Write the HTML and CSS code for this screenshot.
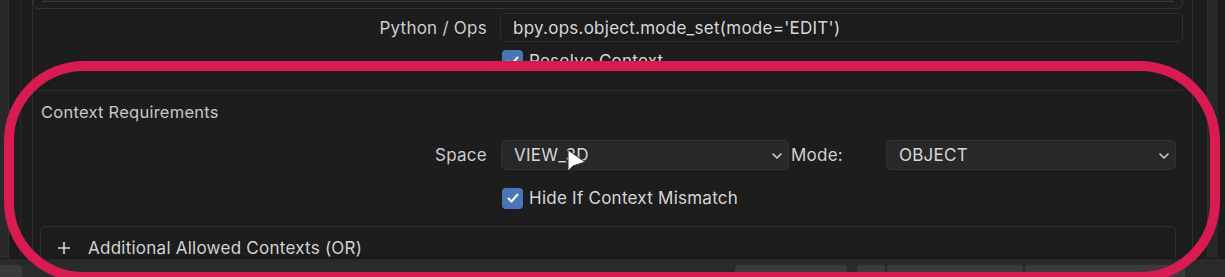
FILE: index.html
```html
<!DOCTYPE html>
<html>
<head>
<meta charset="utf-8">
<link rel="stylesheet" href="styles.css">
</head>
<body>
<div class="app">
  <div class="gutter-left">
    <div class="strip"></div>
    <div class="line-col"></div>
  </div>
  <div class="main">
    <div class="top-box"><div class="top-inner"></div></div>
    <div class="prop-row row-ops">
      <div class="label">Python / Ops</div>
      <div class="text-input">bpy.ops.object.mode_set(mode='EDIT')</div>
    </div>
    <div class="check-row row-resolve">
      <span class="checkbox"><svg width="14" height="14" viewBox="0 0 14 14"><polyline points="2.5,7.5 5.5,10.5 11.5,3.5" fill="none" stroke="#fff" stroke-width="2" stroke-linecap="round" stroke-linejoin="round"/></svg></span>
      <span class="check-label">Resolve Context</span>
    </div>
    <div class="panel">
      <div class="panel-title">Context Requirements</div>
      <div class="prop-row row-space">
        <div class="label">Space</div>
        <div class="dropdown dd-space">
          <span>VIEW_3D</span>
          <svg class="chev" width="10" height="6" viewBox="0 0 10 6"><polyline points="1,1 5,5 9,1" fill="none" stroke="#d0d0d0" stroke-width="1.6" stroke-linecap="round" stroke-linejoin="round"/></svg>
        </div>
        <div class="label2">Mode:</div>
        <div class="dropdown dd-mode">
          <span>OBJECT</span>
          <svg class="chev" width="10" height="6" viewBox="0 0 10 6"><polyline points="1,1 5,5 9,1" fill="none" stroke="#d0d0d0" stroke-width="1.6" stroke-linecap="round" stroke-linejoin="round"/></svg>
        </div>
      </div>
      <div class="check-row row-hide">
        <span class="checkbox"><svg width="14" height="14" viewBox="0 0 14 14"><polyline points="2.5,7.5 5.5,10.5 11.5,3.5" fill="none" stroke="#fff" stroke-width="2" stroke-linecap="round" stroke-linejoin="round"/></svg></span>
        <span class="check-label">Hide If Context Mismatch</span>
      </div>
      <div class="subpanel">
        <svg class="plus" width="14" height="14" viewBox="0 0 14 14"><path d="M7 1 V13 M1 7 H13" stroke="#d8d8d8" stroke-width="1.6"/></svg>
        <span class="sub-title">Additional Allowed Contexts (OR)</span>
      </div>
    </div>
  </div>
  <div class="gutter-right">
    <div class="rline"></div>
    <div class="rstrip"></div>
  </div>
  <div class="bottom-bar">
    <div class="corner-btn"></div>
    <div class="bb-spacer"></div>
    <div class="bb-btn b1"></div>
    <div class="bb-btn b2"></div>
    <div class="bb-btn b3"></div>
    <div class="bb-btn b4"></div>
  </div>
  <svg class="cursor" width="22" height="26" viewBox="0 0 22 26"><path d="M2 2 L2 23 L7 18 L19 14 Z" fill="#ffffff" stroke="#333" stroke-width="1"/></svg>
  <div class="annotation"></div>
</div>
</body>
</html>
```
FILE: styles.css
```css
* { box-sizing: border-box; }
html, body { margin: 0; padding: 0; }
body {
  background: #1d1d1d;
  font-family: "Inter", "Open Sans", sans-serif;
  color: #d2d2d2;
  overflow: hidden;
}
.app {
  position: relative;
  width: 1225px;
  height: 277px;
  display: flex;
  flex-wrap: wrap;
  overflow: hidden;
  background: #1d1d1d;
  font-size: 17px;
  letter-spacing: 0.25px;
}
.gutter-left {
  width: 33px;
  height: 258px;
  display: flex;
}
.strip {
  width: 13px;
  background: #292929;
  border-right: 1px solid #333;
}
.line-col {
  width: 20px;
  border-right: 1px solid #2e2e2e;
  margin-left: 11px;
  border-left: 1px solid #2a2a2a;
}
.main {
  width: 1150px;
  height: 258px;
  display: flex;
  flex-direction: column;
}
.top-box {
  height: 9px;
  border: 1px solid #333;
  border-top: none;
  border-radius: 0 0 6px 6px;
  padding: 0 8px;
}
.top-inner {
  height: 2px;
  border-bottom: 1px solid #3a3a3a;
  background: #232323;
}
.prop-row {
  display: flex;
  align-items: center;
}
.label {
  width: 454px;
  text-align: right;
  color: #cdcdcd;
}
.row-ops {
  margin-top: 4px;
  height: 29px;
  gap: 13px;
}
.text-input {
  flex: 1;
  height: 29px;
  background: #1c1c1c;
  border: 1px solid #2f2f2f;
  border-radius: 5px;
  padding-left: 12px;
  display: flex;
  align-items: center;
  color: #d6d6d6;
}
.check-row {
  display: flex;
  align-items: center;
  padding-left: 469px;
  gap: 6px;
}
.row-resolve {
  margin-top: 8px;
  height: 21px;
}
.checkbox {
  width: 21px;
  height: 21px;
  background: #4a76b8;
  border-radius: 4px;
  display: flex;
  align-items: center;
  justify-content: center;
  flex: none;
}
.check-label {
  color: #d6d6d6;
}
.panel {
  margin-top: 19px;
  border-top: 1px solid #2c2c2c;
  flex: 1;
  display: flex;
  flex-direction: column;
}
.panel-title {
  padding-left: 8px;
  margin-top: 11px;
  color: #c8c8c8;
  height: 20px;
  line-height: 20px;
  font-size: 16.5px;
}
.row-space {
  margin-top: 18px;
  height: 30px;
}
.row-space .label { margin-right: 14px; }
.dropdown {
  height: 30px;
  background: #282828;
  border: 1px solid #333;
  border-radius: 5px;
  display: flex;
  align-items: center;
  justify-content: space-between;
  padding: 0 6px 0 12px;
  color: #d6d6d6;
}
.dd-space { width: 288px; }
.label2 {
  width: 97px;
  padding-left: 2px;
  color: #d0d0d0;
}
.dd-mode { width: 290px; }
.chev { margin-top: 2px; }
.row-hide {
  margin-top: 17px;
  height: 22px;
  padding-left: 469px;
}
.subpanel {
  margin-top: 17px;
  margin-left: 7px;
  margin-right: 7px;
  flex: 1;
  border: 1px solid #2f2f2f;
  border-bottom: none;
  border-radius: 5px 5px 0 0;
  display: flex;
  align-items: center;
  padding-left: 16px;
  padding-top: 11px;
}
.plus {
  flex: none;
  margin-right: 17px;
}
.sub-title {
  color: #d2d2d2;
}
.gutter-right {
  width: 42px;
  height: 258px;
  display: flex;
  padding-left: 9px;
}
.rline {
  width: 16px;
  border-left: 1px solid #2e2e2e;
  border-right: 1px solid #2e2e2e;
}
.rstrip {
  width: 10px;
  background: #282828;
}
.bottom-bar {
  width: 1225px;
  height: 19px;
  background: #2a2a2a;
  border-top: 1px solid #161616;
  display: flex;
  align-items: flex-end;
}
.corner-btn {
  width: 22px;
  height: 12px;
  background: #3a3a3a;
  border-radius: 0 4px 0 0;
}
.bb-spacer { width: 713px; }
.bb-btn {
  height: 12px;
  background: #3b3b3b;
  border-radius: 4px 4px 0 0;
  margin-right: 2px;
}
.b1 { width: 112px; margin-right: 10px; }
.b2 { width: 28px; }
.b3 { width: 136px; }
.b4 { width: 160px; }
.cursor {
  position: absolute;
  left: 566px;
  top: 148px;
}
.annotation {
  position: absolute;
  left: 4px;
  top: 61px;
  width: 1216px;
  height: 221px;
  border: 10px solid #d81b50;
  border-radius: 80px;
  pointer-events: none;
}
```
